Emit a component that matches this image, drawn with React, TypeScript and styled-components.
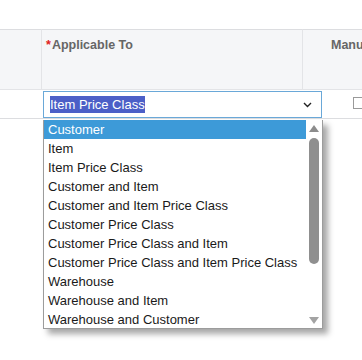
import * as React from 'react';
import styled, { createGlobalStyle } from 'styled-components';

const GlobalStyle = createGlobalStyle`
  html, body {
    margin: 0;
    padding: 0;
    background: #fff;
    font-family: "Liberation Sans", Arial, sans-serif;
  }
  * { box-sizing: border-box; }
`;

const options = [
  'Customer',
  'Item',
  'Item Price Class',
  'Customer and Item',
  'Customer and Item Price Class',
  'Customer Price Class',
  'Customer Price Class and Item',
  'Customer Price Class and Item Price Class',
  'Warehouse',
  'Warehouse and Item',
  'Warehouse and Customer',
];

const Page = styled.div`
  position: relative;
  width: 362px;
  height: 360px;
  overflow: hidden;
  padding-top: 29px;
`;

const Table = styled.div`
  display: grid;
  grid-template-columns: 42px 261px 1fr;
`;

const HeadCell = styled.div<{ $last?: boolean }>`
  height: 61px;
  background: #f5f6f8;
  border-top: 1px solid #dcdde0;
  border-bottom: 1px solid #e3e4e7;
  border-right: ${p => (p.$last ? 'none' : '1px solid #e3e4e7')};
  padding: 8px 0 0 ${p => (p.$last ? '28px' : '4px')};
  font-size: 12.5px;
  font-weight: 700;
  color: #666;
  white-space: nowrap;
`;

const Required = styled.span`
  color: #e02020;
  margin-right: 1px;
`;

const BodyCell = styled.div`
  height: 29px;
  border-bottom: 1px solid #dcdde0;
  display: flex;
  align-items: flex-start;
  padding-top: 1px;
  min-width: 0;
`;

const SelectWrap = styled.div`
  position: relative;
  z-index: 2;
  flex-shrink: 0;
  margin-left: 1px;
  width: 279px;
  height: 27px;
  border: 1px solid #6aa8d8;
  background: #fff;
  display: flex;
  align-items: center;
  padding: 0 6px;
`;

const SelectedText = styled.span`
  flex: 1;
  font-size: 13px;
  color: #fff;
  span {
    background: #4c5fc7;
    padding: 1px 0;
  }
`;

const Chevron = styled.svg`
  width: 9px;
  height: 6px;
  margin-right: 3px;
`;

const Check = styled.div`
  width: 12px;
  height: 12px;
  border: 1px solid #9a9a9a;
  background: #fff;
  margin: 6px 0 0 50px;
  flex-shrink: 0;
`;

const List = styled.div`
  position: absolute;
  top: 120px;
  left: 43px;
  width: 280px;
  height: 209px;
  border: 1px solid #9c9c9c;
  border-top: none;
  background: #fff;
  box-shadow: 5px 5px 6px rgba(0, 0, 0, 0.35);
  display: flex;
  z-index: 3;
`;

const Items = styled.div`
  flex: 1;
  display: flex;
  flex-direction: column;
`;

const Option = styled.div<{ $active?: boolean }>`
  height: 19px;
  line-height: 19px;
  padding-left: 4px;
  font-size: 13px;
  color: ${p => (p.$active ? '#fff' : '#1a1a1a')};
  background: ${p => (p.$active ? '#3d9ad8' : 'transparent')};
  white-space: nowrap;
`;

const Scrollbar = styled.div`
  width: 16px;
  display: flex;
  flex-direction: column;
  align-items: center;
  padding: 5px 0 4px;
`;

const Arrow = styled.div<{ $down?: boolean }>`
  width: 0;
  height: 0;
  border-left: 5px solid transparent;
  border-right: 5px solid transparent;
  ${p =>
    p.$down
      ? 'border-top: 7px solid #a3a3a3;'
      : 'border-bottom: 7px solid #8c8c8c;'}
`;

const Track = styled.div`
  flex: 1;
  width: 100%;
  display: flex;
  justify-content: center;
  padding-top: 6px;
`;

const Thumb = styled.div`
  width: 10px;
  height: 126px;
  border-radius: 5px;
  background: #8f8f8f;
`;

export default function App() {
  return (
    <Page>
      <GlobalStyle />
      <Table>
        <HeadCell />
        <HeadCell>
          <Required>*</Required>Applicable To
        </HeadCell>
        <HeadCell $last>Manu</HeadCell>
        <BodyCell />
        <BodyCell>
          <SelectWrap>
            <SelectedText>
              <span>Item Price Class</span>
            </SelectedText>
            <Chevron viewBox="0 0 9 6">
              <path d="M1 1 L4.5 4.5 L8 1" fill="none" stroke="#222" strokeWidth="1.4" />
            </Chevron>
          </SelectWrap>
        </BodyCell>
        <BodyCell>
          <Check />
        </BodyCell>
      </Table>
      <List>
        <Items>
          {options.map((o, i) => (
            <Option key={o} $active={i === 0}>
              {o}
            </Option>
          ))}
        </Items>
        <Scrollbar>
          <Arrow />
          <Track>
            <Thumb />
          </Track>
          <Arrow $down />
        </Scrollbar>
      </List>
    </Page>
  );
}
